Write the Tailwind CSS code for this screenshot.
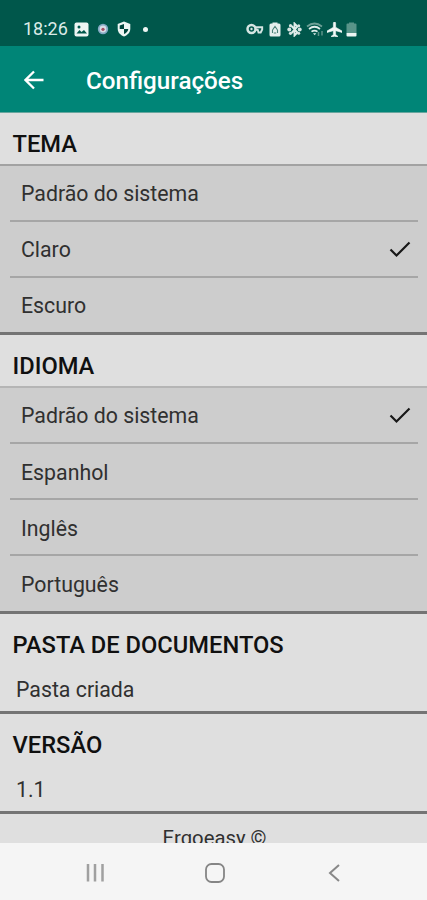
<!DOCTYPE html>
<html lang="pt">
<head>
<meta charset="UTF-8">
<meta name="viewport" content="width=device-width, initial-scale=1">
<title>Configurações</title>
<script src="https://cdn.jsdelivr.net/npm/@tailwindcss/browser@4"></script>
</head>
<body class="w-[427px] h-[900px] overflow-hidden bg-[#dfdfdf] font-[Roboto,sans-serif] text-[#303030] flex flex-col">
<div class="h-[46px] shrink-0 bg-[#00574b] flex items-center pt-3 pl-[23px] text-[#dcebe8]">
  <span class="w-[51px] text-[18px] leading-none whitespace-nowrap">18:26</span>
  <svg class="w-[15px] h-[15px]" viewBox="0 0 15 15"><rect x=".5" y=".5" width="14" height="14" rx="2" fill="#edf5f3"/><path d="M2.500 11.500l3-3.500 2 2 2.500-2 3 3.500z" fill="#00574b"/><circle cx="5" cy="5" r="1.500" fill="#00574b"/></svg>
  <svg class="w-3 h-3 ml-2" viewBox="0 0 12 12"><circle cx="6" cy="6" r="5.200" fill="#84a9c4"/><circle cx="6" cy="6" r="3.400" fill="#d9dde6"/><circle cx="6" cy="6.300" r="1.600" fill="#a34d62"/></svg>
  <svg class="w-[14px] h-4 ml-2" viewBox="0 0 14 16"><path d="M7 .5l6.300 2.500v4.500c0 4-2.600 6.500-6.300 8-3.700-1.500-6.300-4-6.300-8V3z" fill="#edf5f3"/><path d="M7 3v5H2.700V4.500zM7 8h4.300c-.3 2.500-2 4-4.300 5z" fill="#00453c"/></svg>
  <span class="size-[5px] ml-3 rounded-full bg-[#edf5f3]"></span>
  <svg class="w-[18px] h-3 ml-[98px]" viewBox="0 0 18 12"><circle cx="5.500" cy="6" r="4" fill="none" stroke="#d5e5e2" stroke-width="2.500"/><circle cx="5.500" cy="6" r="1.200" fill="#d5e5e2"/><path d="M9 4.300h7.200v2.200l-1.500 3h-2.200l-.8-2.700H9" fill="none" stroke="#d5e5e2" stroke-width="1.900"/></svg>
  <svg class="w-3 h-[15px] ml-[5px]" viewBox="0 0 12 15"><path d="M3.500 1.500V.5h5v1H10a1.500 1.500 0 0 1 1.500 1.500v10a1.500 1.500 0 0 1-1.500 1.500H2A1.500 1.500 0 0 1 .5 13V3A1.500 1.500 0 0 1 2 1.500z" fill="#e4efed"/><path d="M3.500 8L6 4.500 8.500 8M3.500 8v3M8.500 8v3M4.800 11h2.400" fill="none" stroke="#4b8279" stroke-width="1.100"/></svg>
  <svg class="w-[15px] h-[15px] ml-[6px]" viewBox="0 0 15 15"><path d="M4.500 4l6 6.500-3 3v-12l3 3-6 6.500" fill="none" stroke="#e0eeeb" stroke-width="1.900"/><g fill="#d5e5e2"><circle cx="2.300" cy="7.500" r="2"/><circle cx="12.700" cy="7.500" r="2"/><circle cx="3.500" cy="3.700" r="1.600"/><circle cx="3.500" cy="11.300" r="1.600"/><circle cx="11.700" cy="3.800" r="1.500"/><circle cx="11.700" cy="11.300" r="1.500"/></g></svg>
  <svg class="w-[18px] h-[15px] ml-1" viewBox="0 0 18 15"><path d="M1 4.500q7.500-6 15 0" fill="none" stroke="#6da096" stroke-width="1.700"/><path d="M3 7q5.500-4.500 11 0M5.500 9.700q3-2.300 6 0" fill="none" stroke="#e0eeeb" stroke-width="1.700"/><path d="M7 11.300h3.300l-1.600 2z" fill="#e0eeeb"/><path d="M12.500 10v4M16 13.500V9" stroke="#5c9389" stroke-width="1.500"/></svg>
  <svg class="w-[15px] h-[15px] ml-[3px]" viewBox="2 2 20 20"><path d="M22 16v-2l-8.500-5V3.500a1.500 1.500 0 0 0-3 0V9L2 14v2l8.500-2.500V19L8 20.500V22l4-1 4 1v-1.500L13.500 19v-5.500z" fill="#f1f8f6" stroke="#f1f8f6" stroke-width=".8"/></svg>
  <svg class="w-[11px] h-[15px] ml-[4px]" viewBox="0 0 11 15"><path d="M3 1.500V.5h5v1h1.500q1 0 1 1V11H.5V2.500q0-1 1-1z" fill="#589489"/><path d="M.5 11h10v2.500q0 1-1 1h-8q-1 0-1-1z" fill="#edf5f3"/></svg>
</div>
<header class="h-[66px] shrink-0 bg-[#008577] flex items-center pl-6 text-white">
  <svg class="w-5 h-5 mt-[2px]" viewBox="0 0 20 20"><path d="M19.500 10H2M10 1.500L1.500 10l8.500 8.500" fill="none" stroke="white" stroke-width="2.300"/></svg>
  <h1 class="ml-[42px] mt-1 text-[24.2px] font-medium leading-none whitespace-nowrap">Configurações</h1>
</header>
<main class="h-[731px] shrink-0 overflow-hidden border-t border-[#67a69e] text-[21.3px] leading-none">
  <h2 class="h-[51px] pl-[12.500px] pt-[12px] flex items-center text-[23.7px] font-medium text-[#101010]">TEMA</h2>
  <ul class="h-[171px] bg-[#cdcdcd] border-t-2 border-[#a2a2a2] border-b-3 border-b-[#747474] pl-[10px] pr-[9px]">
    <li class="h-[56px] border-b-2 border-[#a6a6a6] pl-[11px] pt-[2px] flex items-center">Padrão do sistema</li>
    <li class="h-[56px] border-b-2 border-[#a6a6a6] pl-[11px] pr-[7px] pt-[2px] flex items-center justify-between">Claro<svg class="w-[22px] h-[18px]" viewBox="0 0 22 18"><path d="M1.500 8.500l6 6L20.500 1.500" fill="none" stroke="#181818" stroke-width="2.200"/></svg></li>
    <li class="h-[54px] pl-[11px] pt-[2px] flex items-center">Escuro</li>
  </ul>
  <h2 class="h-[51px] pl-[12.500px] pt-[13px] flex items-center text-[23.7px] font-medium text-[#101010]">IDIOMA</h2>
  <ul class="h-[228px] bg-[#cdcdcd] border-t-2 border-[#b5b5b5] border-b-3 border-b-[#747474] pl-[10px] pr-[9px]">
    <li class="h-[56px] border-b-2 border-[#a6a6a6] pl-[11px] pr-[7px] pt-[2px] flex items-center justify-between">Padrão do sistema<svg class="w-[22px] h-[18px]" viewBox="0 0 22 18"><path d="M1.500 8.500l6 6L20.500 1.500" fill="none" stroke="#181818" stroke-width="2.200"/></svg></li>
    <li class="h-[56px] border-b-2 border-[#a6a6a6] pl-[11px] pt-[3px] flex items-center">Espanhol</li>
    <li class="h-[56px] border-b-2 border-[#a6a6a6] pl-[11px] pt-[3px] flex items-center">Inglês</li>
    <li class="h-[55px] pl-[11px] pt-[2px] flex items-center">Português</li>
  </ul>
  <section class="h-[100px] border-b-3 border-[#747474]">
    <h2 class="h-[51px] pl-[12.500px] pt-[13px] flex items-center text-[23.7px] font-medium text-[#101010]">PASTA DE DOCUMENTOS</h2>
    <p class="pl-4 pt-[14px]">Pasta criada</p>
  </section>
  <section class="h-[100px] border-b-3 border-[#747474]">
    <h2 class="h-[51px] pl-[12.500px] pt-[13px] flex items-center text-[23.7px] font-medium text-[#101010]">VERSÃO</h2>
    <p class="pl-4 pt-[14px]">1.1</p>
  </section>
  <p class="pt-[14px] text-center pl-[2px] text-[20.3px]">Ergoeasy ©</p>
</main>
<nav class="h-[57px] shrink-0 bg-[#f5f5f5] flex items-center">
  <svg class="w-5 h-5 ml-[85px] mt-[2px]" viewBox="0 0 20 20"><path d="M3 1v17.500M10 1v17.500M17.500 1v17.500" stroke="#a0a0a0" stroke-width="2.500"/></svg>
  <svg class="w-5 h-5 ml-[100px] mt-[2px]" viewBox="0 0 20 20"><rect x="1" y="1" width="18" height="18" rx="5.500" fill="none" stroke="#858585" stroke-width="1.800"/></svg>
  <svg class="w-3 h-5 ml-[103px] mt-[2px]" viewBox="0 0 12 20"><path d="M11 2L2 10l9 8" fill="none" stroke="#888" stroke-width="2"/></svg>
</nav>
</body>
</html>
